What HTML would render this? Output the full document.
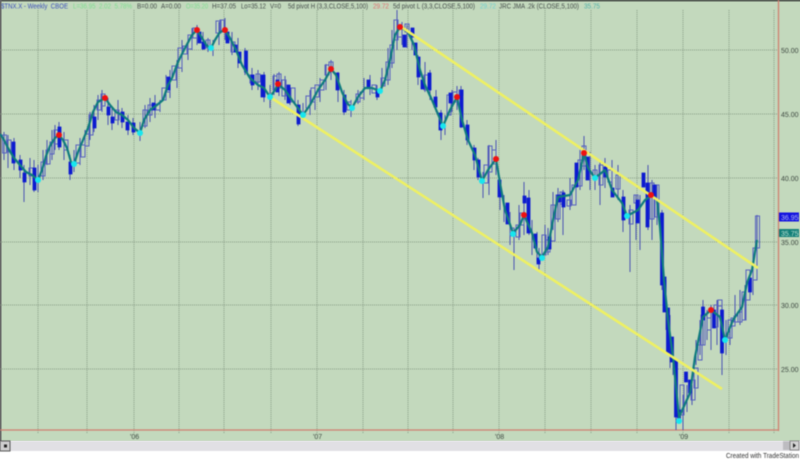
<!DOCTYPE html>
<html><head><meta charset="utf-8"><style>
html,body{margin:0;padding:0;background:#fff;width:800px;height:459px;overflow:hidden}
svg{display:block;font-family:"Liberation Sans",sans-serif}
.b{filter:blur(.45px)}
</style></head><body>
<svg width="800" height="459" viewBox="0 0 800 459" xmlns="http://www.w3.org/2000/svg">
<rect width="800" height="459" fill="#fff"/>
<rect width="800" height="441" fill="#c3d9bd"/>
<rect width="800" height="1.5" fill="#555d55"/>
<rect width="1.5" height="441" fill="#666"/>
<g class="b">
<g stroke="#8a9e88" stroke-width="1" stroke-dasharray="1 1" fill="none">
<path d="M0 50H778M0 114H778M0 178H778M0 242H778M0 305H778M0 369H778"/>
<path d="M38 10V433M87 10V433M134 10V433M179 10V433M224 10V433M271 10V433M317 10V433M363 10V433M408 10V433M453 10V433M499 10V433M545 10V433M591 10V433M637 10V433M683 10V433M729 10V433M774 10V433"/>
</g>
<path d="M0 430H778M778.500 0V431" stroke="#cf7f70" stroke-width="1.300" fill="none"/>
<!-- wicks -->
<path fill="none" stroke="#4a54b4" stroke-width="1" d="M4 132V160M8 135V168M14 138V170M20 155V178M24 165V202M30 158V185M34 160V192M38 165V192M43 150V180M47 140V165M52 130V160M55 125V150M59 122V150M64 132V160M70 155V180M74 150V172M80 138V165M85 130V155M90 112V140M94 105V132M98 95V120M102 90V112M108 98V125M112 108V130M118 100V125M122 108V128M128 115V135M133 118V135M140 122V141M145 105V128M150 98V122M155 95V118M160 100V112M166 75V100M170 70V98M177 60V88M182 40V72M188 38V60M192 28V50M197 25V45M203 32V50M208 38V52M213 40V56M219 22V45M225 18V40M232 32V55M238 38V68M245 48V75M252 68V90M258 70V90M264 72V102M270 85V108M274 74V95M279 72V96M285 76V100M290 85V105M298 100V126M303 103V120M310 90V115M315 85V110M320 78V102M326 64V90M331 60V80M338 72V102M344 90V115M351 100V117M358 90V104M364 78V100M370 75V95M377 85V100M382 68V92M388 48V85M392 30V68M397 10V50M402 22V45M407 25V48M412 30V50M418 55V85M425 62V92M430 70V100M436 90V112M441 110V140M445 115V135M452 90V112M457 86V110M461 86V128M467 120V145M474 145V170M478 158V180M483 172V198M489 145V195M496 140V175M500 178V210M504 195V222M510 212V245M514 228V270M519 205V240M524 182V235M529 190V235M532 220V255M537 232V262M539 248V272M545 225V250M548 228V255M553 192V230M558 188V222M563 190V235M570 178V210M576 165V205M580 150V190M584 136V170M590 152V190M595 165V190M600 160V205M605 158V188M612 160V190M618 165V200M623 190V232M630 205V272M636 195V240M640 195V250M648 165V230M652 180V240M657 185V225M662 210V290M666 280V330M670 315V368M673 340V375M676 360V430M683 395V430M687 385V412M692 385V405M696 340V365M700 320V355M703 300V345M707 310V340M711 305V350M717 300V345M722 300V375M726 320V355M730 330V345M735 295V325M740 290V325M745 285V320M750 270V295M753 260V295M757 215V260"/>
<!-- hollow candles -->
<path fill="none" stroke="#5660c0" stroke-width="1" d="M2.500 135h4v18h-4zM7 140h4v12h-4zM29 168h4v8h-4zM41 162h4v14h-4zM46 150h4v14h-4zM50 142h4v12h-4zM54 130h4v14h-4zM64 140h4v10h-4zM76 145h4v18h-4zM81 145h4v12h-4zM85 134h4v12h-4zM89 115h4v20h-4zM97 100h4v10h-4zM101 94h4v12h-4zM115 110h4v10h-4zM143 110h4v16h-4zM148 105h4v10h-4zM156 104h4v6h-4zM162 88h4v12h-4zM166 78h4v14h-4zM172 66h4v14h-4zM178 48h4v20h-4zM183 46h4v8h-4zM188 35h4v14h-4zM193 28h4v10h-4zM206 40h4v8h-4zM216 21h5v12h-5zM220 20h4v12h-4zM231 42h4v10h-4zM250 75h4v8h-4zM256 74h4v8h-4zM273 76h4v14h-4zM277 74h4v14h-4zM282 80h4v16h-4zM291 88h4v14h-4zM306 96h4v12h-4zM311 88h4v14h-4zM315 85h4v12h-4zM320 80h4v10h-4zM325 65h4v10h-4zM329 62h4v6h-4zM347 102h4v8h-4zM356 94h4v8h-4zM360 92h4v6h-4zM372 85h4v8h-4zM381 78h4v8h-4zM386 62h4v18h-4zM390 45h4v18h-4zM394 20h4v20h-4zM398 25h4v12h-4zM405 24h4v8h-4zM424 75h4v15h-4zM447 95h4v20h-4zM453 92h4v10h-4zM459 90h4v5h-4zM484 165h4v18h-4zM488 146h4v26h-4zM492 150h4v14h-4zM510 228h4v8h-4zM516 225h4v12h-4zM520 213h4v12h-4zM542 235h4v20h-4zM546 240h4v12h-4zM551 205h4v36h-4zM556 195h4v24h-4zM560 192h4v12h-4zM567 200h4v6h-4zM572 185h4v20h-4zM578 160h4v26h-4zM582 146h4v20h-4zM593 170h4v8h-4zM599 165h4v20h-4zM608 170h4v12h-4zM616 175h4v14h-4zM629 210h4v14h-4zM634 195h4v8h-4zM650 183h4v36h-4zM655 185h4v32h-4zM680 385h4v30h-4zM691 380h4v20h-4zM694 368h4v20h-4zM698 345h4v15h-4zM701 315h4v30h-4zM707 318h4v12h-4zM714 305h4v22h-4zM718 300h4v6h-4zM728 320h4v18h-4zM731 318h4v8h-4zM734 316h4v6h-4zM738 312h4v10h-4zM742 292h4v28h-4zM746 270h4v30h-4zM753 248h4v32h-4zM755.500 216h4v32h-4z"/>
<!-- solid candles -->
<path fill="#0c1ad0" stroke="#0c1ad0" stroke-width=".8" d="M12 142h3v21h-3zM19 160h3v10h-3zM23 173h3v9h-3zM33 168h3v22h-3zM58 127h3v20h-3zM69 162h3v12h-3zM93 117h3v11h-3zM107 107h3v8h-3zM111 117h3v6h-3zM121 112h3v10h-3zM126 122h3v8h-3zM132 123h3v9h-3zM152 103h3v7h-3zM167 77h3v13h-3zM198 32h3v11h-3zM202 42h3v7h-3zM226 32h3v11h-3zM234 45h3v7h-3zM238 52h3v11h-3zM244.500 51h3v21h-3zM251 75h3v10h-3zM261 75h4v22h-4zM276 80h3v12h-3zM287 85h3v18h-3zM297 105h3v19h-3zM336 73h3v17h-3zM343 95h3v17h-3zM367 80h3v7h-3zM376 90h3v7h-3zM403 35h3v12h-3zM411 28h3v9h-3zM414 43h3v12h-3zM417 57h3v20h-3zM421 80h3v9h-3zM428 73h3v17h-3zM434 97h3v10h-3zM439 113h3v17h-3zM449 93h3v10h-3zM460 90h3v37h-3zM466 125h3v15h-3zM473 148h3v12h-3zM477 160h3v17h-3zM498 180h3v17h-3zM506 203h3v21h-3zM523 196h3v7h-3zM527 198h3v35h-3zM534 234h3v14h-3zM537 258h3v6h-3zM548 237h3v12h-3zM557 195h4v7h-4zM562 193h3v14h-3zM575 163h3v24h-3zM586 157h3v23h-3zM604 167h3v10h-3zM611 188h3v9h-3zM622 197h3v23h-3zM636 200h3v23h-3zM642 173h3v14h-3zM646 183h3v44h-3zM653 185h3v12h-3zM660.500 213h3v72h-3zM663 277h3v35h-3zM666.500 308h3v45h-3zM670.500 337h3v25h-3zM674.500 360h3v57h-3zM677.500 410h3v8h-3zM684.500 372h3v10h-3zM688.500 380h3v13h-3zM701.500 307h3v13h-3zM712.500 310h3v18h-3zM720.500 310h3v43h-3zM748.500 278h3v14h-3z"/>
<!-- JMA -->
<polyline fill="none" stroke="#0f7b7e" stroke-width="2.200" stroke-linejoin="round" points="0,134 4,140 8,148 14,158 20,165 26,172 32,175 38,180 42,170 46,156 50,146 55,138 59,135 63,140 67,148 71,162 74,164 78,152 83,140 88,128 93,112 98,102 105,98 110,105 116,112 122,115 128,120 134,128 140,133 144,120 150,110 157,105 163,100 168,85 172,78 178,62 184,50 192,35 197,30 202,38 207,46 211,48 215,40 220,32 225,30 230,38 236,50 242,65 250,78 258,85 264,88 270,97 275,90 278,84 285,90 292,100 298,108 303,115 310,105 318,90 325,80 331,69 336,75 342,92 347,103 352,108 358,97 365,88 372,88 380,91 385,80 390,60 395,35 400,27 408,32 414,45 420,70 425,85 432,100 443,126 450,110 457,97 462,120 468,140 475,155 482,181 488,170 496,159 500,183 505,210 513,233 520,225 524,215 532,233 537,252 542,257 548,247 553,220 558,197 570,195 578,180 584,153 588,168 595,178 605,170 612,190 622,203 627,216 638,210 645,200 652,195 657,200 660,227 664,280 668,320 673,357 679,417 690,393 695,357 703,317 711,310 720,317 725,340 733,320 742,307 747,283 752,270 757,240"/>
<!-- trend lines -->
<path d="M400 26L758 268M270 97L722 389" stroke="#eef062" stroke-width="2.600" fill="none"/>
<!-- pivots -->
<g fill="#17e6ee">
<circle cx="38" cy="180" r="3"/><circle cx="74" cy="164" r="3"/><circle cx="140" cy="133" r="3"/><circle cx="211" cy="48" r="3"/><circle cx="270" cy="97" r="3"/><circle cx="303" cy="115" r="3"/><circle cx="352" cy="108" r="3"/><circle cx="380" cy="91" r="3"/><circle cx="443" cy="126" r="3"/><circle cx="482" cy="181" r="3"/><circle cx="513" cy="234" r="3"/><circle cx="542" cy="258" r="3"/><circle cx="595" cy="178" r="3"/><circle cx="627" cy="216" r="3"/><circle cx="679" cy="421" r="3"/><circle cx="725" cy="340" r="3"/>
</g>
<g fill="#ee1111">
<circle cx="59" cy="135" r="3"/><circle cx="105" cy="98" r="3"/><circle cx="197" cy="30" r="3"/><circle cx="225" cy="30" r="3"/><circle cx="278" cy="84" r="3"/><circle cx="331" cy="69" r="3"/><circle cx="400" cy="27" r="3"/><circle cx="457" cy="97" r="3"/><circle cx="496" cy="159" r="3"/><circle cx="524" cy="215" r="3"/><circle cx="584" cy="153" r="3"/><circle cx="651" cy="195" r="3"/><circle cx="711" cy="310" r="3"/>
</g>
<!-- header -->
<g font-size="7" fill="#444c4a" lengthAdjust="spacingAndGlyphs">
<text x="1" y="8.500" fill="#3c50b8" textLength="67" lengthAdjust="spacingAndGlyphs">$TNX.X - Weekly&#160; CBOE</text>
<text x="73" y="8.500" fill="#7fdc90" textLength="59" lengthAdjust="spacingAndGlyphs">L=36.95&#160; 2.02&#160; 5.78%</text>
<text x="137" y="8.500" textLength="20" lengthAdjust="spacingAndGlyphs">B=0.00</text>
<text x="161" y="8.500" textLength="20" lengthAdjust="spacingAndGlyphs">A=0.00</text>
<text x="186" y="8.500" fill="#7fdc90" textLength="22" lengthAdjust="spacingAndGlyphs">O=35.20</text>
<text x="212" y="8.500" textLength="24" lengthAdjust="spacingAndGlyphs">H=37.05</text>
<text x="241" y="8.500" textLength="25" lengthAdjust="spacingAndGlyphs">Lo=35.12</text>
<text x="270" y="8.500" textLength="11" lengthAdjust="spacingAndGlyphs">V=0</text>
<text x="288" y="8.500" textLength="80" lengthAdjust="spacingAndGlyphs">5d pivot H (3,3,CLOSE,5,100)</text>
<text x="373" y="8.500" fill="#e07070" textLength="16" lengthAdjust="spacingAndGlyphs">29.72</text>
<text x="393" y="8.500" textLength="82" lengthAdjust="spacingAndGlyphs">5d pivot L (3,3,CLOSE,5,100)</text>
<text x="480" y="8.500" fill="#70d0d0" textLength="16" lengthAdjust="spacingAndGlyphs">29.72</text>
<text x="499" y="8.500" textLength="80" lengthAdjust="spacingAndGlyphs">JRC JMA .2k (CLOSE,5,100)</text>
<text x="584" y="8.500" fill="#50b0a8" textLength="16" lengthAdjust="spacingAndGlyphs">35.75</text>
</g>
<!-- price axis -->
<g font-size="7" fill="#3f4a42">
<text x="781" y="53">50.00</text><text x="781" y="117">45.00</text><text x="781" y="181">40.00</text><text x="781" y="245">35.00</text><text x="781" y="308">30.00</text><text x="781" y="372">25.00</text>
</g>
<rect x="779" y="212.500" width="20" height="9" fill="#1414e0"/>
<text x="781" y="220" font-size="7" fill="#b0b8f0">36.95</text>
<rect x="779" y="229" width="20" height="8" fill="#127f78"/>
<text x="781" y="236" font-size="7" fill="#b8e0d0">35.75</text>
<!-- time axis -->
<g font-size="7" fill="#3f4a42">
<text x="130" y="439">'06</text><text x="313" y="439">'07</text><text x="495" y="439">'08</text><text x="679" y="439">'09</text>
</g>
<!-- scrollbar -->
<rect x="0" y="441" width="800" height="10" fill="#e1e0e4"/>
<rect x="0" y="441" width="10" height="10" fill="#cfcfcf" stroke="#555" stroke-width="1"/>
<rect x="4" y="444.500" width="3" height="3" fill="#222"/>
<rect x="783" y="441" width="7" height="9" fill="#bdbcc0"/>
<rect x="790" y="441" width="9" height="9" fill="#d4d4d4" stroke="#666" stroke-width=".7"/>
<path d="M793 443l3 2.500-3 2.500z" fill="#222"/>
<text x="726" y="458" font-size="7" fill="#333" textLength="73" lengthAdjust="spacingAndGlyphs">Created with TradeStation</text>
</g>
</svg>
</body></html>
